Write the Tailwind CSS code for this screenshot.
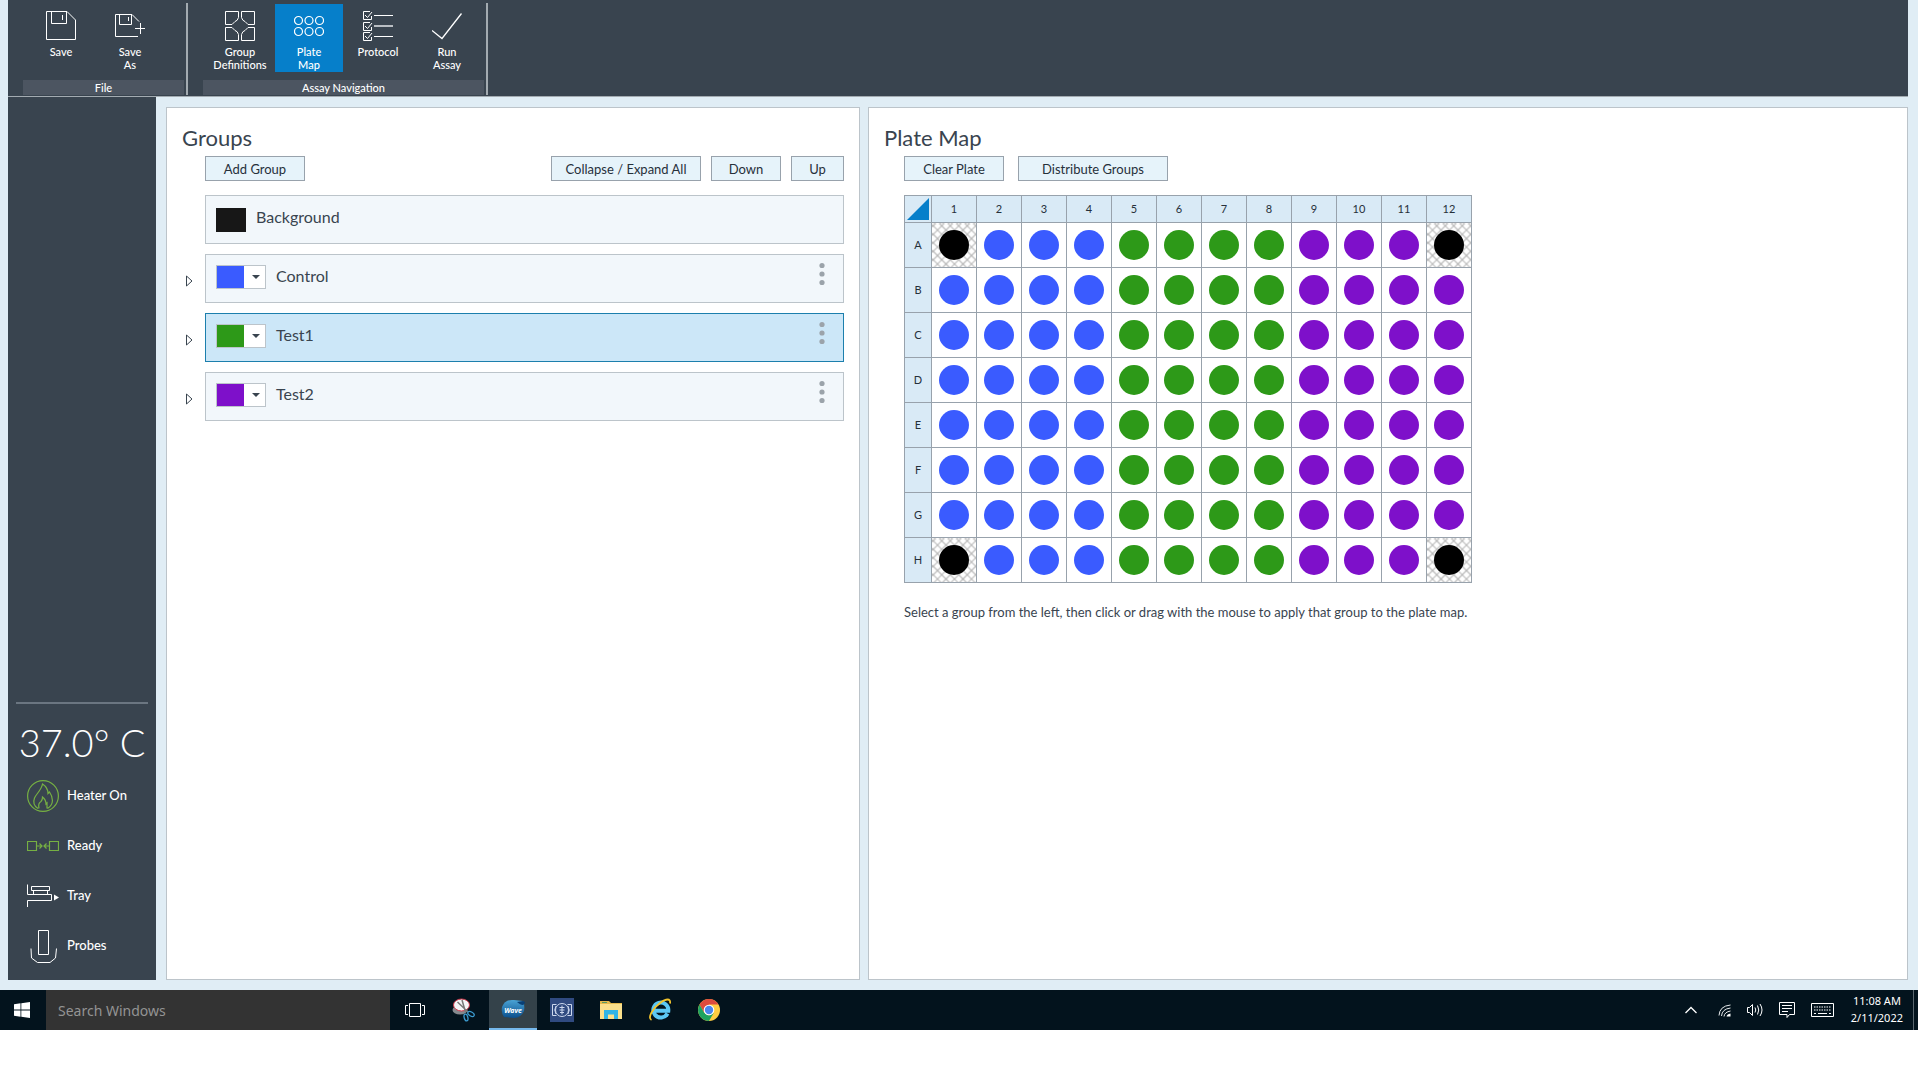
<!DOCTYPE html>
<html lang="en">
<head>
<meta charset="utf-8">
<title>Wave - Plate Map</title>
<script src="https://cdn.jsdelivr.net/npm/@tailwindcss/browser@4"></script>
</head>
<body class="flex min-h-screen flex-col bg-white pr-0.5 pb-[50px] font-['Lato',sans-serif] text-[#39444f]">
<div class="flex flex-1 flex-col bg-[#e0edf5] pl-2 pr-2.5">

  <!-- Ribbon -->
  <header class="flex h-[97px] border-b border-[#a3abb1] bg-[#39444f] pl-[15px] text-[11px] leading-[13px] font-medium text-white">
    <section class="flex flex-col pt-1" aria-label="File">
      <div class="flex h-[76px] gap-px pl-1">
        <button class="flex h-[68px] w-[68px] flex-col items-center gap-1 pt-[7px]">
          <svg class="size-[30px]" viewBox="0 0 30 30" fill="none" stroke="white"><path d="M.5.5H21L29.500 9V28.500H.5ZM5.500.5V12.500H20.500V.5M16.500 4V9"/></svg>
          <span>Save</span>
        </button>
        <button class="flex h-[68px] w-[68px] flex-col items-center gap-1 pt-[7px]">
          <svg class="size-[30px]" viewBox="0 0 30 30" fill="none" stroke="white"><path d="M23 25.500H.5V3.500H17L24 10.500M4.500 3.500V13.500H16.500V3.500M13.500 6V10M25.500 12V23M20 17.500H30"/></svg>
          <span>Save<br>As</span>
        </button>
      </div>
      <div class="h-[15px] w-[161px] bg-[#4c5561] pt-px text-center">File</div>
    </section>
    <div class="mt-[3px] ml-0.5 h-[92px] w-0.5 bg-[#a3abb1]"></div>
    <section class="ml-[15px] flex flex-col pt-1" aria-label="Assay Navigation">
      <div class="flex h-[76px] gap-px pl-[3px]">
        <button class="flex h-[68px] w-[68px] flex-col items-center gap-1 pt-[7px]">
          <svg class="size-[30px]" viewBox="0 0 30 30" fill="none" stroke="white"><path d="M.5.5H13.500V6.500Q12.500 10 10 10.500L7 13.500H.5ZM29.500.5H16.500V6.500Q17.500 10 20 10.500L23 13.500H29.500ZM.5 29.500H13.500V23.500Q12.500 20 10 19.500L7 16.500H.5ZM29.500 29.500H16.500V23.500Q17.500 20 20 19.500L23 16.500H29.500Z"/></svg>
          <span>Group<br>Definitions</span>
        </button>
        <button class="flex h-[68px] w-[68px] flex-col items-center gap-1 bg-[#067fca] pt-[7px]" aria-pressed="true">
          <svg class="size-[30px]" viewBox="0 0 30 30" fill="none" stroke="white" stroke-width="1.200"><circle cx="4.500" cy="9.500" r="4"/><circle cx="15" cy="9.500" r="4"/><circle cx="25.500" cy="9.500" r="4"/><circle cx="4.500" cy="20.500" r="4"/><circle cx="15" cy="20.500" r="4"/><circle cx="25.500" cy="20.500" r="4"/></svg>
          <span>Plate<br>Map</span>
        </button>
        <button class="flex h-[68px] w-[68px] flex-col items-center gap-1 pt-[7px]">
          <svg class="size-[30px]" viewBox="0 0 30 30" fill="none" stroke="white"><path d="M7 .5H.5V8.500H8.500V5M2 4L4.500 6.500L9 1M7 11.500H.5V19.500H8.500V16M2 15L4.500 17.500L9 12M7 21.500H.5V29.500H8.500V26M2 25L4.500 27.500L9 22M11 4.500H30M11 25.500H30"/><path d="M11 15H30" stroke-width="2" stroke="#b9bec3"/></svg>
          <span>Protocol</span>
        </button>
        <button class="flex h-[68px] w-[68px] flex-col items-center gap-1 pt-[7px]">
          <svg class="size-[30px]" viewBox="0 0 30 30" fill="none" stroke="white" stroke-width="1.300"><path d="M0 19.500L10 27.500L29.500 2.500"/></svg>
          <span>Run<br>Assay</span>
        </button>
      </div>
      <div class="h-[15px] w-[281px] bg-[#4c5561] pt-px text-center">Assay Navigation</div>
    </section>
    <div class="mt-[3px] ml-0.5 h-[92px] w-0.5 bg-[#a3abb1]"></div>
  </header>

  <div class="flex flex-1 pb-2.5">
    <!-- Instrument status -->
    <aside class="flex w-[148px] shrink-0 flex-col justify-end bg-[#39444f] pb-[9px] text-[13px] font-medium text-white">
      <div class="mx-2 mb-3 h-0.5 bg-[#6b7681]"></div>
      <div class="h-[55px] text-center text-[38px] leading-[53px] font-light whitespace-nowrap">37.0° C</div>
      <div class="flex h-[50px] items-center gap-2 pl-[19px]">
        <svg class="size-8" viewBox="0 0 32 32" fill="none" stroke="#76b043" stroke-width="1.200"><circle cx="16" cy="16" r="15.400"/><path d="M11 28.500C7 26 6 22 7.500 18C9.500 13.500 14.500 10 15.500 4C20 7 21 10 21 13.500L22.500 12C26 17 27.500 24 20.500 28.500M12 28.500C11 24 12 22.500 14 21.500C15.500 20 15.500 18.500 15.500 17C18 19 19 21 19 24L20 23V28.500"/></svg>
        <span>Heater On</span>
      </div>
      <div class="flex h-[50px] items-center gap-2 pl-[19px]">
        <svg class="size-8" viewBox="0 0 32 32" fill="none" stroke="#76b043"><path d="M.5 11.500H9.500V20.500H.5ZM22.500 11.500H31.500V20.500H22.500ZM9.500 16H15.500M16.500 16H22.500M12.500 13.500L15 16L12.500 18.500M19.500 13.500L17 16L19.500 18.500" stroke-width="1.200"/></svg>
        <span>Ready</span>
      </div>
      <div class="flex h-[50px] items-center gap-2 pl-[19px]">
        <svg class="size-8" viewBox="0 0 32 32" fill="none" stroke="white"><path d="M.5 4.500V14.500H24.500V20.500H.5V27M4.500 6.500H22.500V10.500H4.500ZM6.500 10.500V14M20.500 10.500V14"/><path d="M27 14.500L32 17.500L27 20.500Z" fill="white" stroke="none"/></svg>
        <span>Tray</span>
      </div>
      <div class="flex h-[50px] items-center gap-2 pl-[19px]">
        <svg class="h-[34px] w-8" viewBox="0 0 32 34" fill="none" stroke="white"><path d="M11.500 1.500H21.500V25.500H11.500ZM4 19.500L4.500 29L10.500 33.500H23L28.500 29L29.500 19.500"/></svg>
        <span>Probes</span>
      </div>
    </aside>

    <main class="ml-2.5 grid flex-1 grid-cols-[694fr_1040fr] gap-2 pt-2.5 text-[13px]">
      <section class="border border-[#bcc4ca] bg-white pt-4 pr-[15px] pl-[15px]">
        <h1 class="text-[22px] leading-7">Groups</h1>
        <div class="mt-1 flex gap-2.5 pl-[23px] text-[#26303a]">
          <button class="h-[25px] w-[100px] border border-[#98a2ac] bg-[#e6f3fa] pt-0.5">Add Group</button>
          <button class="ml-auto h-[25px] w-[150px] border border-[#98a2ac] bg-[#e6f3fa] pt-0.5">Collapse / Expand All</button>
          <button class="h-[25px] w-[70px] border border-[#98a2ac] bg-[#e6f3fa] pt-0.5">Down</button>
          <button class="h-[25px] w-[53px] border border-[#98a2ac] bg-[#e6f3fa] pt-0.5">Up</button>
        </div>
        <ul class="mt-3.5 flex flex-col gap-2.5 text-[16px]">
          <li class="flex pl-[23px]">
            <div class="flex h-[49px] flex-1 items-start gap-2.5 border border-[#bcc4ca] bg-[#f2f7fb] pt-3 pl-2.5">
              <span class="h-6 w-[30px] bg-[#171717]"></span>
              <span class="leading-[18px]">Background</span>
            </div>
          </li>
          <li class="flex">
            <button class="w-[23px] pt-1 pl-1" aria-label="Expand Control"><svg class="h-3 w-[7px]" viewBox="0 0 7 12" fill="none" stroke="#39444f"><path d="M.5 1V11L6 6Z"/></svg></button>
            <div class="flex h-[49px] flex-1 items-start gap-2.5 border border-[#bcc4ca] bg-[#f2f7fb] pt-2.5 pr-[18px] pl-2.5">
              <button class="flex h-6 w-[50px] border border-[#bcc4ca] bg-white" aria-label="Control colour"><span class="h-full w-[27px] bg-[#3a5bff]"></span><svg class="mt-[9px] ml-2 h-1 w-2" viewBox="0 0 8 4" fill="#39444f"><path d="M0 0H8L4 4Z"/></svg></button>
              <span class="pt-0.5 leading-[18px]">Control</span>
              <button class="-mt-[3px] ml-auto" aria-label="Control options"><svg class="h-[25px] w-[6px]" viewBox="0 0 6 25" fill="#9ba3aa"><circle cx="3" cy="3.500" r="2.600"/><circle cx="3" cy="12" r="2.600"/><circle cx="3" cy="20.500" r="2.600"/></svg></button>
            </div>
          </li>
          <li class="flex">
            <button class="w-[23px] pt-1 pl-1" aria-label="Expand Test1"><svg class="h-3 w-[7px]" viewBox="0 0 7 12" fill="none" stroke="#39444f"><path d="M.5 1V11L6 6Z"/></svg></button>
            <div class="flex h-[49px] flex-1 items-start gap-2.5 border border-[#1c7fad] bg-[#cce7f8] pt-2.5 pr-[18px] pl-2.5">
              <button class="flex h-6 w-[50px] border border-[#bcc4ca] bg-white" aria-label="Test1 colour"><span class="h-full w-[27px] bg-[#2d9918]"></span><svg class="mt-[9px] ml-2 h-1 w-2" viewBox="0 0 8 4" fill="#39444f"><path d="M0 0H8L4 4Z"/></svg></button>
              <span class="pt-0.5 leading-[18px]">Test1</span>
              <button class="-mt-[3px] ml-auto" aria-label="Test1 options"><svg class="h-[25px] w-[6px]" viewBox="0 0 6 25" fill="#9ba3aa"><circle cx="3" cy="3.500" r="2.600"/><circle cx="3" cy="12" r="2.600"/><circle cx="3" cy="20.500" r="2.600"/></svg></button>
            </div>
          </li>
          <li class="flex">
            <button class="w-[23px] pt-1 pl-1" aria-label="Expand Test2"><svg class="h-3 w-[7px]" viewBox="0 0 7 12" fill="none" stroke="#39444f"><path d="M.5 1V11L6 6Z"/></svg></button>
            <div class="flex h-[49px] flex-1 items-start gap-2.5 border border-[#bcc4ca] bg-[#f2f7fb] pt-2.5 pr-[18px] pl-2.5">
              <button class="flex h-6 w-[50px] border border-[#bcc4ca] bg-white" aria-label="Test2 colour"><span class="h-full w-[27px] bg-[#7e10ca]"></span><svg class="mt-[9px] ml-2 h-1 w-2" viewBox="0 0 8 4" fill="#39444f"><path d="M0 0H8L4 4Z"/></svg></button>
              <span class="pt-0.5 leading-[18px]">Test2</span>
              <button class="-mt-[3px] ml-auto" aria-label="Test2 options"><svg class="h-[25px] w-[6px]" viewBox="0 0 6 25" fill="#9ba3aa"><circle cx="3" cy="3.500" r="2.600"/><circle cx="3" cy="12" r="2.600"/><circle cx="3" cy="20.500" r="2.600"/></svg></button>
            </div>
          </li>
        </ul>
      </section>

      <section class="border border-[#bcc4ca] bg-white pt-4 pl-[15px]">
        <h1 class="text-[22px] leading-7">Plate Map</h1>
        <div class="mt-1 flex gap-3.5 pl-5 text-[#26303a]">
          <button class="h-[25px] w-[100px] border border-[#98a2ac] bg-[#e6f3fa] pt-0.5">Clear Plate</button>
          <button class="h-[25px] w-[150px] border border-[#98a2ac] bg-[#e6f3fa] pt-0.5">Distribute Groups</button>
        </div>
        <div class="mt-3.5 pl-5">
          <table class="w-[568px] table-fixed border-collapse text-[11px] text-[#26303a]">
            <thead>
              <tr id="columns" class="h-[27px] bg-[#d9eaf6]">
                <th class="w-[27px] border border-[#98a2ac] p-0" aria-label="Select all"><svg class="mx-auto size-[22px]" viewBox="0 0 22 22" fill="#067fca"><path d="M0 22L22 0V22Z"/></svg></th>
              </tr>
            </thead>
            <tbody id="wells"></tbody>
          </table>
          <p class="mt-[19px] leading-5">Select a group from the left, then click or drag with the mouse to apply that group to the plate map.</p>
        </div>
      </section>
    </main>
  </div>
</div>

<!-- Taskbar -->
<footer class="flex h-10 bg-[#03131d] font-['Noto_Sans',sans-serif] text-white">
  <button class="flex w-[46px] items-center pl-3.5" aria-label="Start"><svg class="size-4" viewBox="0 0 16 16" fill="white"><path d="M0 2.200L6.500 1.300V7.500H0ZM7.300 1.200L16 0V7.500H7.300ZM0 8.400H6.500V14.700L0 13.800ZM7.300 8.400H16V16L7.300 14.800Z"/></svg></button>
  <input class="w-[344px] bg-[#333333] px-3 text-[14px] text-white placeholder:text-[#949494]" type="text" placeholder="Search Windows" aria-label="Search Windows">
  <nav class="ml-px flex gap-px">
    <button class="flex w-12 items-center justify-center" aria-label="Task View"><svg class="h-4 w-5" viewBox="0 0 20 16" fill="none" stroke="white"><path d="M4.500 1.500H15.500V14.500H4.500ZM3 3.500H.5V12.500H3M17 3.500H19.500V12.500H17"/></svg></button>
    <button class="flex w-12 items-center justify-center" aria-label="Snipping Tool"><svg class="size-6" viewBox="0 0 24 24" fill="none"><ellipse cx="8" cy="12" rx="7.500" ry="4.500" fill="#85898e"/><ellipse cx="9.500" cy="7" rx="8" ry="6" fill="#f4f4f6" stroke="#d2374a"/><path d="M5.500 4L16 14M10 2L13.500 14" stroke="#777" stroke-width="1.500"/><ellipse cx="19" cy="16" rx="3.500" ry="2" transform="rotate(30 19 16)" stroke="#3b9bd0" stroke-width="1.300"/><ellipse cx="14" cy="19.500" rx="1.800" ry="3.500" transform="rotate(-15 14 19.500)" stroke="#3b9bd0" stroke-width="1.300"/></svg></button>
    <button class="flex w-12 items-center justify-center border-b-2 border-[#76b9ed] bg-[#34424a]" aria-label="Wave">
      <svg class="h-5 w-6" viewBox="0 0 24 20"><defs><linearGradient id="wv" x2="0" y2="1"><stop stop-color="#4aa3d5"/><stop offset="1" stop-color="#0a4e8c"/></linearGradient></defs><path d="M1 8Q4 0 13 1L22 2Q24 6 23 12Q20 19 13 19L3 18Q0 14 1 8Z" fill="url(#wv)"/><path d="M16 3Q23 9 24 3L22 2Z" fill="#0a3f75"/><text x="12" y="13.500" text-anchor="middle" fill="white" font-family="Noto Sans, sans-serif" font-size="7" font-weight="700" font-style="italic">Wave</text></svg>
    </button>
    <button class="flex w-12 items-center justify-center" aria-label="Instrument service"><svg class="size-6" viewBox="0 0 24 24" fill="none" stroke="#cdd8ee"><path d="M0 0H24V24H0Z" fill="#304a80" stroke="none"/><path d="M6.500 6.500H2.500V17.500H6.500M17.500 6.500H21.500V17.500H17.500M6 8Q3.500 12 6 16M18 8Q20.500 12 18 16"/><circle cx="12" cy="12" r="6.500"/><path d="M12 7.500V16.500M9.500 9.500H14.500M9.500 12H14.500M10 14.500H14"/></svg></button>
    <button class="flex w-12 items-center justify-center" aria-label="File Explorer"><svg class="h-5 w-[22px]" viewBox="0 0 22 20"><path d="M0 1H9L11 3H22V19H0Z" fill="#e5b94d"/><path d="M0 4H22V19H0Z" fill="#fbe08c"/><path d="M2 2H7V3H2Z" fill="#5a9b62"/><path d="M4 19V10H18V19H14V14.500H8V19Z" fill="#2fb4e6"/></svg></button>
    <button class="flex w-12 items-center justify-center" aria-label="Internet Explorer"><svg class="size-6" viewBox="0 0 24 24" fill="none"><path d="M19.500 15.500A7.500 7.500 0 1 1 20.300 12.800H6" stroke="#5cc8f4" stroke-width="4"/><path d="M3.500 22C-1 20 5 10 12 5C18 .5 23 0 22 5.500" stroke="#f3c42c" stroke-width="1.800"/></svg></button>
    <button class="flex w-12 items-center justify-center" aria-label="Google Chrome"><svg class="size-[22px]" viewBox="0 0 22 22"><circle cx="11" cy="11" r="11" fill="#ffcd42"/><path d="M1.500 5.500A11 11 0 0 1 20.500 5.500H11L6.200 13.700Z" fill="#dd4b3e"/><path d="M1.500 5.500A11 11 0 0 0 11 22L15.800 13.700L11 16.500L6.200 13.700Z" fill="#1da261"/><circle cx="11" cy="11" r="5.300" fill="white"/><circle cx="11" cy="11" r="4.200" fill="#4a86ee"/></svg></button>
  </nav>
  <div class="ml-auto flex items-center">
    <button class="mr-[21px]" aria-label="Show hidden icons"><svg class="h-2 w-3" viewBox="0 0 12 8" fill="none" stroke="white" stroke-width="1.300"><path d="M.5 7L6 1.500L11.500 7"/></svg></button>
    <button class="mr-4" aria-label="Network"><svg class="size-[13px]" viewBox="0 0 13 13" fill="none" stroke="#e6e9eb"><path d="M1 11.500Q1.500 2 12.500 1M3.500 12Q4 5 12.500 4M6 12.500Q6.500 8 12.500 7"/><path d="M8.500 12.500Q9 10 12.500 9.500V12.500Z" fill="white" stroke="none"/></svg></button>
    <button class="mr-4" aria-label="Volume"><svg class="h-3.5 w-4" viewBox="0 0 16 14" fill="none" stroke="white"><path d="M.5 4.500H2.500L5.500 1.500V12.500L2.500 9.500H.5ZM8 4.500Q9.500 7 8 9.500M10.500 2.500Q13 7 10.500 11.500M13 1Q17 7 13 13"/></svg></button>
    <button class="mr-4" aria-label="Notifications"><svg class="size-4" viewBox="0 0 16 16" fill="none" stroke="white"><path d="M.5.5H15.500V12.500H10.500L8 15.500V12.500H.5ZM3 3.500H13M3 6.500H13M3 9.500H9"/></svg></button>
    <button class="mr-[17px]" aria-label="Touch keyboard"><svg class="h-3.5 w-[23px]" viewBox="0 0 23 14" fill="none" stroke="white"><path d="M.5.5H22.500V13.500H.5Z"/><path d="M3 4H20M3 7H20" stroke-dasharray="1.500 1"/><path d="M3 10.500H5M7 10.500H16M18 10.500H20"/></svg></button>
    <time class="mr-2.5 pb-0.5 text-center text-[11px] leading-[17px]" datetime="2022-02-11T11:08">11:08 AM<br>2/11/2022</time>
    <button class="h-full w-[5px] border-l border-[#5b676f]" aria-label="Show desktop"></button>
  </div>
</footer>

<script>
  const columns = document.getElementById('columns');
  for (let c = 1; c <= 12; c++) {
    columns.insertAdjacentHTML('beforeend', `<th class="border border-[#98a2ac] p-0 font-normal" scope="col">${c}</th>`);
  }
  const fills = ['bg-[#3a5bff]', 'bg-[#2d9918]', 'bg-[#7e10ca]'];
  const hatch = 'bg-[repeating-linear-gradient(45deg,#b0b0b0_0px,transparent_1px,transparent_5px,#b0b0b0_6px),repeating-linear-gradient(-45deg,#b0b0b0_0px,transparent_1px,transparent_5px,#b0b0b0_6px)]';
  document.getElementById('wells').innerHTML = [...'ABCDEFGH'].map(r => {
    let row = `<tr class="h-[45px]"><th class="border border-[#98a2ac] bg-[#d9eaf6] p-0 font-normal" scope="row">${r}</th>`;
    for (let c = 0; c < 12; c++) {
      const background = (r === 'A' || r === 'H') && (c === 0 || c === 11);
      row += `<td class="border border-[#98a2ac] p-0 ${background ? hatch : ''}"><div class="mx-auto size-[30px] rounded-full ${background ? 'bg-black' : fills[Math.floor(c / 4)]}"></div></td>`;
    }
    return row + '</tr>';
  }).join('');
</script>
</body>
</html>
